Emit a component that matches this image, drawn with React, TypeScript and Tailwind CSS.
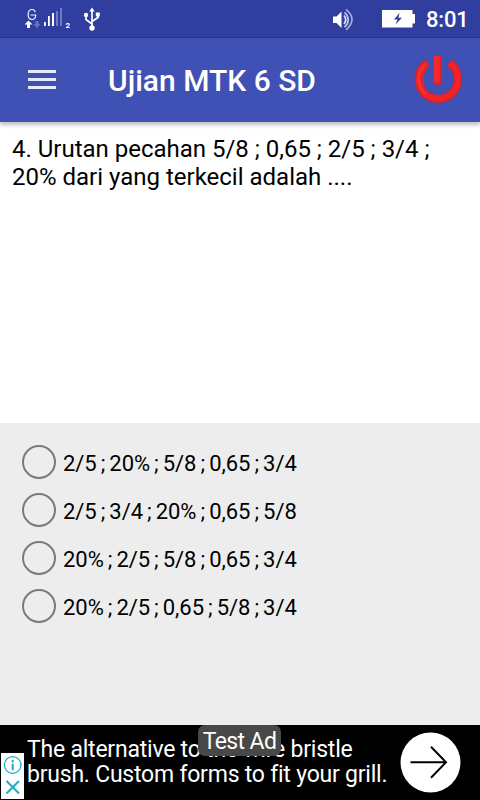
const options = [
  "2/5 ; 20% ; 5/8 ; 0,65 ; 3/4",
  "2/5 ; 3/4 ; 20% ; 0,65 ; 5/8",
  "20% ; 2/5 ; 5/8 ; 0,65 ; 3/4",
  "20% ; 2/5 ; 0,65 ; 5/8 ; 3/4",
];

function SignalIcon() {
  return (
    <svg width="40" height="24" viewBox="24 6 40 24" fill="none">
      <path d="M35.300 12.200C34.800 10.400 33.800 9.500 32 9.500c-2.500 0-3.800 2-3.800 5s1.300 5 3.800 5 3.700-1.700 3.700-4.500H30.500" stroke="#f1f3ff" strokeWidth="1.200" />
      <path d="M28.500 20.500l4 4h-2.500v3.500h-3v-3.500h-2.500z" fill="#fff" />
      <path d="M37 28l3.500-4h-2v-3h-3v3h-2z" fill="#6673c4" />
      <path d="M44 22h1.800v4H44zM48 16h1.800v10H48zM52 13h2v13h-2z" fill="#fff" />
      <path d="M56 11h2v15h-2zM60 8h2v18h-2z" fill="#6f7ac4" />
    </svg>
  );
}

function UsbIcon() {
  return (
    <svg width="18" height="24" viewBox="83 7 18 24" fill="none">
      <path d="M92 27V10M92 24l-6-4.500V15M92 21.500l6-4V14" stroke="#fff" strokeWidth="1.700" />
      <path d="M92 7.500l2.700 4h-5.400zM95.800 12.500h4v4h-4z" fill="#fff" />
      <circle cx="86" cy="15" r="2.200" fill="#fff" />
      <circle cx="92" cy="28" r="2.700" fill="#fff" />
    </svg>
  );
}

function SpeakerIcon() {
  return (
    <svg width="24" height="24" viewBox="332 8 24 24" fill="none">
      <path d="M333 16.500h3.500l5-5v16.500l-5-5H333z" fill="#fff" />
      <path d="M344 15.500q3.500 4 0 8.500" stroke="#e1e4fa" strokeWidth="1.700" />
      <path d="M344.500 12.200q7.500 7.500 0 15" stroke="#bec5ee" strokeWidth="1.600" />
      <path d="M346 9.300q12 10 0 20.500" stroke="#a3adde" strokeWidth="1.700" />
    </svg>
  );
}

function BatteryIcon() {
  return (
    <svg width="34" height="20" viewBox="382 9 34 20">
      <path d="M382 10h30.500v4h2.500v9.500h-2.500v4H382z" fill="#fff" />
      <path d="M399.500 13l-5.500 6.500h3.500l-2 5 6.500-6.700h-3.500z" fill="#303f9f" />
    </svg>
  );
}

function PowerIcon() {
  return (
    <svg width="50" height="52" viewBox="413 54 50 52" fill="none">
      <path d="M427.300 63A19.600 19.600 0 1 0 449.300 63" stroke="#d21f2b" strokeWidth="8.200" />
      <path d="M427.300 62.900A19.600 19.600 0 1 0 449.300 62.900" stroke="#f02426" strokeWidth="6.200" />
      <path d="M424.500 65A20 20 0 0 0 425.500 94" stroke="#f43f39" strokeWidth="1.500" />
      <path d="M429.800 66A16 16 0 0 0 424 85" stroke="#d8303f" strokeWidth="1" />
      <path d="M434 56h8v28.500h-8z" fill="#dc1f28" />
      <path d="M434 56h5.700v26.500H434z" fill="#f42a2b" />
    </svg>
  );
}

export default function App() {
  return (
    <div className="flex h-[800px] w-[480px] flex-col overflow-hidden bg-white font-[Roboto,sans-serif] text-black">
      <div className="flex h-[38px] shrink-0 items-start border-b border-[#283593] bg-[#303f9f]">
        <div className="ml-6 mt-1.5"><SignalIcon /></div>
        <span className="ml-[1.5px] mt-[21px] w-[8.500px] text-[8px] font-bold leading-[9px] text-white">2</span>
        <div className="ml-[9px] mt-[7px]"><UsbIcon /></div>
        <div className="ml-[231px] mt-2"><SpeakerIcon /></div>
        <div className="ml-[26px] mt-[9px]"><BatteryIcon /></div>
        <span className="ml-[10px] mt-[5px] whitespace-nowrap text-[22px] font-medium leading-[30px] tracking-[-0.2px] text-white">8:01</span>
      </div>
      <header className="z-10 flex h-[84px] shrink-0 items-center bg-[#3f51b5] shadow-[0_3px_4px_rgba(0,0,0,0.25)]">
        <div className="mb-px ml-7 flex w-7 flex-col gap-[5px]">
          <i className="h-[3px] bg-[#e9ebff]" />
          <i className="h-[3px] bg-[#e9ebff]" />
          <i className="h-[3px] bg-[#e9ebff]" />
        </div>
        <h1 className="ml-[52px] w-[305px] whitespace-nowrap pt-px text-[30px] font-medium leading-9 text-white">Ujian MTK 6 SD</h1>
        <button aria-label="Keluar"><PowerIcon /></button>
      </header>
      <main className="flex grow flex-col">
        <section className="h-[301px] shrink-0 bg-white pl-3 pt-[13px] text-[24px] leading-7">
          <p className="whitespace-nowrap tracking-[-0.01px]">4. Urutan pecahan 5/8 ; 0,65 ; 2/5 ; 3/4 ;</p>
          <p className="whitespace-nowrap">20% dari yang terkecil adalah ....</p>
        </section>
        <section className="grow bg-[#ededed] pt-[15px]">
          {options.map((option) => (
            <label key={option} className="flex h-12 items-center pl-[22px]">
              <span className="size-[34px] shrink-0 rounded-full border-2 border-[#7a7a7a]" />
              <span className="ml-[7px] whitespace-nowrap pt-0.5 text-[22px] tracking-[-0.05px] [word-spacing:-1.35px]">{option}</span>
            </label>
          ))}
        </section>
      </main>
      <footer className="relative flex h-[75px] shrink-0 bg-black text-white">
        <div className="ml-px mt-7 flex h-[46px] w-[23px] shrink-0 flex-col items-center bg-white">
          <svg width="23" height="46" viewBox="1 753 23 46" fill="none" stroke="#20aac2">
            <circle cx="12.700" cy="765" r="8.300" strokeWidth="1.300" />
            <path d="M12.700 760v2.400M12.700 763.800v6.500" strokeWidth="2" />
            <path d="M6.500 781l12.500 12.500M19 781L6.500 793.500" strokeWidth="2" />
          </svg>
        </div>
        <div className="ml-[3px] w-[373px] pt-3 text-[23px] leading-[25px] tracking-[-0.22px]">
          <p className="whitespace-nowrap">The alternative to the wire bristle</p>
          <p className="whitespace-nowrap">brush. Custom forms to fit your grill.</p>
        </div>
        <svg className="mt-[7px]" width="61" height="61" viewBox="400 732 61 61" fill="none">
          <circle cx="430.500" cy="762.500" r="30" fill="#fff" />
          <path d="M410.500 762.300h35M431 746.800l15 15.500-15 15.500" stroke="#000" strokeWidth="2" />
        </svg>
        <div className="absolute left-[198px] top-0 h-[31px] w-[83px] whitespace-nowrap rounded-[7px] bg-[#484848] text-center text-[23px] leading-[34px] tracking-[-0.6px]">Test Ad</div>
      </footer>
    </div>
  );
}
